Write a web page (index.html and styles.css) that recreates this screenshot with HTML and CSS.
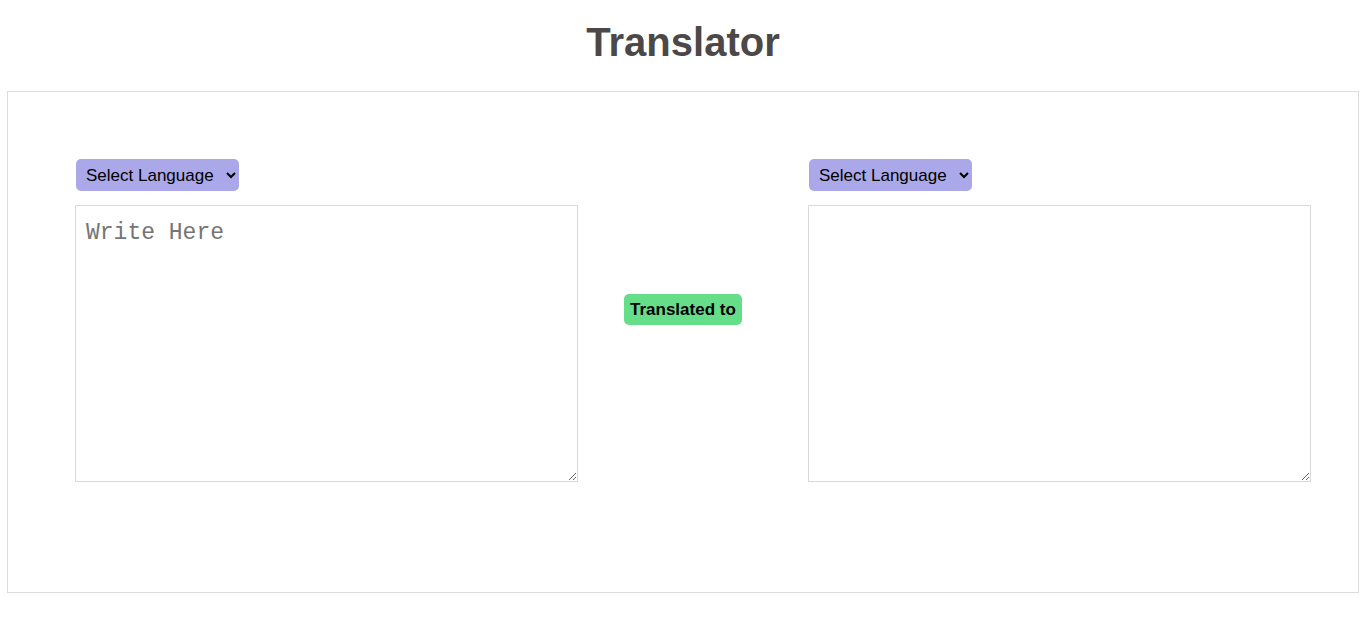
FILE: index.html
```html
<!DOCTYPE html>
<html>
<head>
<meta charset="utf-8">
<title>Translator</title>
<link rel="stylesheet" href="styles.css">
</head>
<body>
<h1 class="title">Translator</h1>
<div class="panel">
  <div class="column">
    <select class="lang">
      <option>Select Language</option>
    </select>
    <textarea class="box" placeholder="Write Here"></textarea>
  </div>
  <div class="middle">
    <button class="go">Translated to</button>
  </div>
  <div class="column">
    <select class="lang">
      <option>Select Language</option>
    </select>
    <textarea class="box"></textarea>
  </div>
</div>
</body>
</html>
```
FILE: styles.css
```css
html, body {
  margin: 0;
  padding: 0;
  background: #fff;
  font-family: "Liberation Sans", Arial, sans-serif;
}
.title {
  margin: 0;
  padding-top: 20px;
  height: 91px;
  box-sizing: border-box;
  text-align: center;
  font-size: 40px;
  font-weight: bold;
  color: #4d4848;
  line-height: 44px;
}
.panel {
  margin: 0 7px;
  height: 502px;
  box-sizing: border-box;
  border: 1px solid #dcdcdc;
  display: flex;
  align-items: flex-start;
  padding: 67px 46px 0 67px;
}
.column {
  display: flex;
  flex-direction: column;
  align-items: flex-start;
  gap: 14px;
}
.lang {
  margin-left: 1px;
  width: 163px;
  height: 32px;
  padding: 0 2px 0 6px;
  background: #aba8e9;
  border: none;
  border-radius: 5px;
  font-family: "Liberation Sans", Arial, sans-serif;
  font-size: 17px;
  color: #000;
}
.box {
  width: 503px;
  height: 277px;
  box-sizing: border-box;
  border: 1px solid #d9d9d9;
  padding: 14px 10px 10px;
  font-family: "Liberation Mono", monospace;
  font-size: 23px;
  resize: both;
  outline: none;
}
.box::placeholder {
  color: #757575;
}
.middle {
  width: 230px;
  align-self: stretch;
  display: flex;
  justify-content: flex-start;
  padding-top: 135px;
  padding-left: 46px;
  box-sizing: border-box;
}
.go {
  height: 31px;
  align-self: flex-start;
  padding: 0 6px;
  background: #66dd88;
  border: none;
  border-radius: 5px;
  font-family: "Liberation Sans", Arial, sans-serif;
  font-weight: bold;
  font-size: 17px;
  color: #000;
}
```
